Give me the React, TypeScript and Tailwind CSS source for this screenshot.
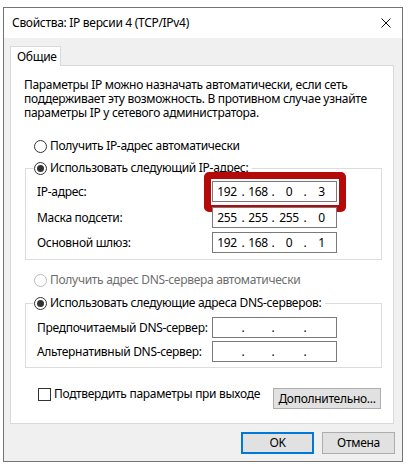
import React from 'react';

const FONT = "font-['Noto_Sans',sans-serif]";

type IpProps = { parts?: string[]; highlight?: boolean };

// Windows-style IP address control: four octet cells split by fixed dots
const IpField: React.FC<IpProps> = ({ parts = ['', '', '', ''], highlight }) => (
    <div className="relative w-[125px] h-[21px] border border-[#7a7a7a] bg-white grid grid-cols-[28px_4px_26px_4px_28px_4px_1fr] items-center text-center">
        <span>{parts[0]}</span>
        <span>.</span>
        <span>{parts[1]}</span>
        <span>.</span>
        <span>{parts[2]}</span>
        <span>.</span>
        <span>{parts[3]}</span>
        {highlight && (
            <div className="absolute -left-[9px] -top-[10px] -right-[10px] -bottom-[11px] border-[7px] border-[#b40a0a] rounded-[5px]" />
        )}
    </div>
);

const Radio: React.FC<{ checked?: boolean; disabled?: boolean; label: string }> = ({ checked, disabled, label }) => (
    <div className={`flex items-center h-[16px] gap-[3px] whitespace-nowrap ${disabled ? 'text-[#6d6d6d]' : ''}`}>
        <div
            className={`w-[13px] h-[13px] rounded-full border bg-white flex items-center justify-center ${
                disabled ? 'border-[#bcbcbc]' : 'border-[#333333]'
            }`}
        >
            {checked && <div className="w-[7px] h-[7px] rounded-full bg-[#333333]" />}
        </div>
        <span>{label}</span>
    </div>
);

const Row: React.FC<{ label: string; className?: string; children: React.ReactNode }> = ({ label, className, children }) => (
    <div className={`flex items-center pl-[11px] ${className ?? ''}`}>
        <span className="w-[175px] whitespace-nowrap">{label}</span>
        {children}
    </div>
);

export default function App() {
    return (
        <div className={`w-[408px] h-[468px] bg-white pt-[7px] pl-[3px] ${FONT} text-[12px] leading-[16px] tracking-[-0.3px] text-black`}>
            <div className="w-[400px] h-[455px] border border-[#747474] flex flex-col bg-[#f0f0f0]">
                {/* title bar */}
                <div className="h-[30px] shrink-0 bg-white flex items-center justify-between pl-[8px] pr-[10px]">
                    <span>Свойства: IP версии 4 (TCP/IPv4)</span>
                    <svg width="10" height="10" viewBox="0 0 10 10" className="mr-[1px]">
                        <path d="M0.5 0.5 L9.5 9.5 M9.5 0.5 L0.5 9.5" stroke="#111" strokeWidth="1" />
                    </svg>
                </div>

                <div className="flex-1 pt-[8px] pl-[6px]">
                    <div className="relative z-10 w-[51px] h-[20px] -mb-[1px] bg-white border border-b-0 border-[#d9d9d9] pl-[6px] flex items-center">
                        Общие
                    </div>

                    {/* tab page */}
                    <div className="w-[384px] h-[359px] border border-[#d9d9d9] bg-white">
                        <p className="pt-[12px] pl-[13px] leading-[14px] whitespace-nowrap">
                            Параметры IP можно назначать автоматически, если сеть
                            <br />
                            поддерживает эту возможность. В противном случае узнайте
                            <br />
                            параметры IP у сетевого администратора.
                        </p>

                        <div className="mt-[18px] ml-[23px]">
                            <Radio label="Получить IP-адрес автоматически" />
                        </div>

                        <fieldset className="mt-[6px] ml-[14px] w-[357px] border border-[#dcdcdc] pb-[6px]">
                            <legend className="ml-[8px] pr-[4px] bg-white">
                                <Radio checked label="Использовать следующий IP-адрес:" />
                            </legend>
                            <Row label="IP-адрес:" className="mt-[5px]">
                                <IpField parts={['192', '168', '0', '3']} highlight />
                            </Row>
                            <Row label="Маска подсети:" className="mt-[5px]">
                                <IpField parts={['255', '255', '255', '0']} />
                            </Row>
                            <Row label="Основной шлюз:" className="mt-[4px]">
                                <IpField parts={['192', '168', '0', '1']} />
                            </Row>
                        </fieldset>

                        <div className="mt-[12px] ml-[23px]">
                            <Radio disabled label="Получить адрес DNS-сервера автоматически" />
                        </div>

                        <fieldset className="mt-[7px] ml-[14px] w-[357px] border border-[#dcdcdc] pb-[5px]">
                            <legend className="ml-[8px] pr-[4px] bg-white">
                                <Radio checked label="Использовать следующие адреса DNS-серверов:" />
                            </legend>
                            <Row label="Предпочитаемый DNS-сервер:" className="mt-[6px]">
                                <IpField />
                            </Row>
                            <Row label="Альтернативный DNS-сервер:" className="mt-[3px]">
                                <IpField />
                            </Row>
                        </fieldset>

                        <div className="mt-[19px] ml-[27px] mr-[12px] flex items-start justify-between">
                            <div className="flex items-center gap-[3px] h-[14px] whitespace-nowrap">
                                <div className="w-[13px] h-[13px] border border-[#333333] bg-white" />
                                <span>Подтвердить параметры при выходе</span>
                            </div>
                            <button className="mt-[1px] w-[108px] h-[21px] bg-[#e1e1e1] border border-[#adadad] whitespace-nowrap">
                                Дополнительно...
                            </button>
                        </div>
                    </div>

                    <div className="mt-[8px] pr-[7px] flex justify-end gap-[8px]">
                        <button className="w-[73px] h-[22px] bg-[#e1e1e1] border-2 border-[#0078d7]">OK</button>
                        <button className="w-[73px] h-[22px] bg-[#e1e1e1] border border-[#adadad]">Отмена</button>
                    </div>
                </div>
            </div>
        </div>
    );
}
